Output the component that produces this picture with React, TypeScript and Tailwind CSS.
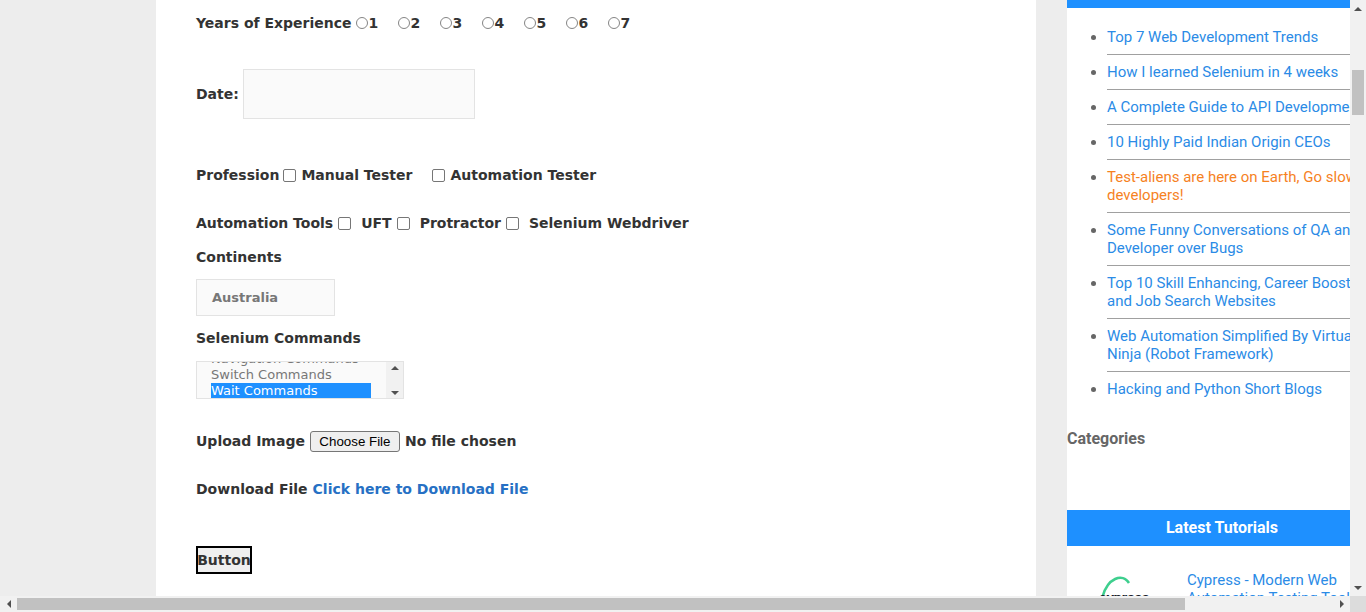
import React from "react";

const MAIN_FONT = { fontFamily: '"DejaVu Sans", Verdana, sans-serif' };
const SIDE_FONT = { fontFamily: 'Roboto, "Liberation Sans", sans-serif' };

const POSTS = [
  { title: "Top 7 Web Development Trends" },
  { title: "How I learned Selenium in 4 weeks" },
  { title: "A Complete Guide to API Development" },
  { title: "10 Highly Paid Indian Origin CEOs" },
  { title: "Test-aliens are here on Earth, Go slow developers!", hot: true },
  { title: "Some Funny Conversations of QA and Developer over Bugs" },
  { title: "Top 10 Skill Enhancing, Career Boosting and Job Search Websites" },
  { title: "Web Automation Simplified By Virtual Ninja (Robot Framework)" },
  { title: "Hacking and Python Short Blogs" },
];

function Radio() {
  return <span className="inline-block size-[12px] shrink-0 rounded-full border border-[#858585] bg-white" />;
}

function Checkbox({ className = "" }: { className?: string }) {
  return (
    <span
      className={`inline-block size-[13px] shrink-0 rounded-[2px] border border-[#767676] bg-white ${className}`}
    />
  );
}

function Triangle({ dir }: { dir: "up" | "down" | "left" | "right" }) {
  const cls = {
    up: "border-x-[4px] border-b-[4px] border-x-transparent border-b-[#505050]",
    down: "border-x-[4px] border-t-[4px] border-x-transparent border-t-[#505050]",
    left: "border-y-[4px] border-r-[4px] border-y-transparent border-r-[#505050]",
    right: "border-y-[4px] border-l-[4px] border-y-transparent border-l-[#505050]",
  }[dir];
  return <span className={`inline-block size-0 ${cls}`} />;
}

function MainForm() {
  return (
    <div className="flex w-[880px] shrink-0 flex-col bg-white pl-[40px] text-[14px] font-bold text-[#333]" style={MAIN_FONT}>
      <div className="mt-[14px] flex h-[18px] items-center">
        <span>Years of Experience</span>
        <div className="ml-[4px] flex items-center">
          {[1, 2, 3, 4, 5, 6, 7].map((n) => (
            <span key={n} className="flex w-[42px] items-center gap-[1px]">
              <Radio />
              <span>{n}</span>
            </span>
          ))}
        </div>
      </div>

      <div className="mt-[37px] flex h-[50px] items-center">
        <span>Date:</span>
        <div className="ml-[4px] h-[50px] w-[232px] border border-[#e3e3e3] bg-[#fafafa]" />
      </div>

      <div className="mt-[47px] flex h-[18px] items-center">
        <span>Profession</span>
        <Checkbox className="ml-[4px]" />
        <span className="ml-[5px]">Manual Tester</span>
        <Checkbox className="ml-[20px]" />
        <span className="ml-[5px]">Automation Tester</span>
      </div>

      <div className="mt-[30px] flex h-[18px] items-center">
        <span>Automation Tools</span>
        <Checkbox className="ml-[5px]" />
        <span className="ml-[10px]">UFT</span>
        <Checkbox className="ml-[5px]" />
        <span className="ml-[10px]">Protractor</span>
        <Checkbox className="ml-[5px]" />
        <span className="ml-[10px]">Selenium Webdriver</span>
      </div>

      <div className="mt-[16px] flex h-[18px] items-center">Continents</div>

      <div className="mt-[13px] flex h-[37px] w-[139px] items-center border border-[#e3e3e3] bg-[#fafafa] pl-[15px] text-[13px] text-[#777]">
        Australia
      </div>

      <div className="mt-[13px] flex h-[18px] items-center">Selenium Commands</div>

      <div className="mt-[14px] flex h-[38px] w-[208px] overflow-hidden border border-[#e3e3e3] bg-[#fafafa] text-[13px] font-normal text-[#777]">
        <div className="flex w-[175px] flex-col pl-[14px]">
          <div className="-mt-[11px] h-[16px] leading-[16px]">Navigation Commands</div>
          <div className="h-[16px] leading-[16px]">Switch Commands</div>
          <div className="h-[16px] w-[160px] bg-[#1e90ff] leading-[16px] text-white">Wait Commands</div>
        </div>
        <div className="ml-auto flex w-[17px] flex-col items-center bg-[#f1f1f1] pt-[4px]">
          <Triangle dir="up" />
          <span className="mt-[5px] h-[2px] w-[12px] bg-[#c1c1c1]" />
          <span className="mt-[6px]">
            <Triangle dir="down" />
          </span>
        </div>
      </div>

      <div className="mt-[32px] flex h-[21px] items-center">
        <span>Upload Image</span>
        <span
          className="ml-[5px] flex h-[21px] w-[90px] items-center justify-center rounded-[3px] border border-[#767676] bg-[#efefef] text-[13.33px] font-normal text-black"
          style={{ fontFamily: '"Liberation Sans", Arial, sans-serif' }}
        >
          Choose File
        </span>
        <span className="ml-[5px]">No file chosen</span>
      </div>

      <div className="mt-[28px] flex h-[18px] items-center">
        <span>Download File</span>
        <span className="ml-[5px] text-[#2670c4]">Click here to Download File</span>
      </div>

      <div className="mt-[48px] flex h-[28px] w-[56px] items-center justify-center border-2 border-black bg-[#efefef] text-[14px]">
        Button
      </div>
    </div>
  );
}

function Sidebar() {
  return (
    <div className="flex w-[283px] shrink-0 flex-col overflow-hidden bg-white" style={SIDE_FONT}>
      <div className="flex w-[310px] flex-col">
        <div className="h-[8px] bg-[#1e90ff]" />
        <ul className="mt-[12px] list-disc pl-[40px] text-[15px] leading-[18px] marker:text-[#666]">
          {POSTS.map((p, i) => (
            <li key={p.title} className={`py-[8px] ${i > 0 ? "border-t border-[#a0a0a0]" : ""}`}>
              <span className={p.hot ? "text-[#f6821f]" : "text-[#2b8be6]"}>{p.title}</span>
            </li>
          ))}
        </ul>
        <div className="mt-[24px] text-[16px] font-bold leading-[18px] text-[#666]">Categories</div>
        <div className="mt-[62px] flex h-[36px] items-center justify-center bg-[#1e90ff] text-[16px] font-bold text-white">
          Latest Tutorials
        </div>
        <div className="mt-[25px] flex">
          <div className="relative ml-[30px] h-[40px] w-[80px]">
            <svg width="40" height="30" viewBox="0 0 40 30" className="absolute left-[2px] top-0">
              <path d="M3 28 C 8 6, 24 2, 30 12" fill="none" stroke="#3ecf8e" strokeWidth="2.5" />
            </svg>
            <span className="absolute left-[2px] top-[16px] text-[15px] font-bold tracking-tight text-[#1b1e2e]">cypress</span>
          </div>
          <div className="ml-[10px] w-[170px] text-[15px] leading-[18px] text-[#2b8be6]">
            Cypress - Modern Web Automation Testing Tool
          </div>
        </div>
      </div>
    </div>
  );
}

export default function App() {
  return (
    <div className="flex h-[612px] w-[1366px] flex-col overflow-hidden bg-[#ededed]">
      <div className="flex h-[596px] overflow-hidden">
        <div className="flex w-[1350px] overflow-hidden">
          <div className="w-[156px] shrink-0" />
          <MainForm />
          <div className="w-[31px] shrink-0" />
          <Sidebar />
        </div>
        <div className="flex w-[16px] flex-col items-center bg-[#f1f1f1]">
          <div className="flex h-[17px] items-center">
            <Triangle dir="up" />
          </div>
          <div className="mt-[53px] h-[45px] w-[12px] bg-[#c1c1c1]" />
          <div className="mt-auto flex h-[17px] items-center">
            <Triangle dir="down" />
          </div>
        </div>
      </div>
      <div className="flex h-[16px] items-center bg-[#f1f1f1]">
        <div className="flex w-[17px] justify-center">
          <Triangle dir="left" />
        </div>
        <div className="h-[12px] w-[1168px] bg-[#c1c1c1]" />
        <div className="ml-auto flex w-[16px] justify-center">
          <Triangle dir="right" />
        </div>
        <div className="h-[16px] w-[16px] bg-[#dcdcdc]" />
      </div>
    </div>
  );
}
